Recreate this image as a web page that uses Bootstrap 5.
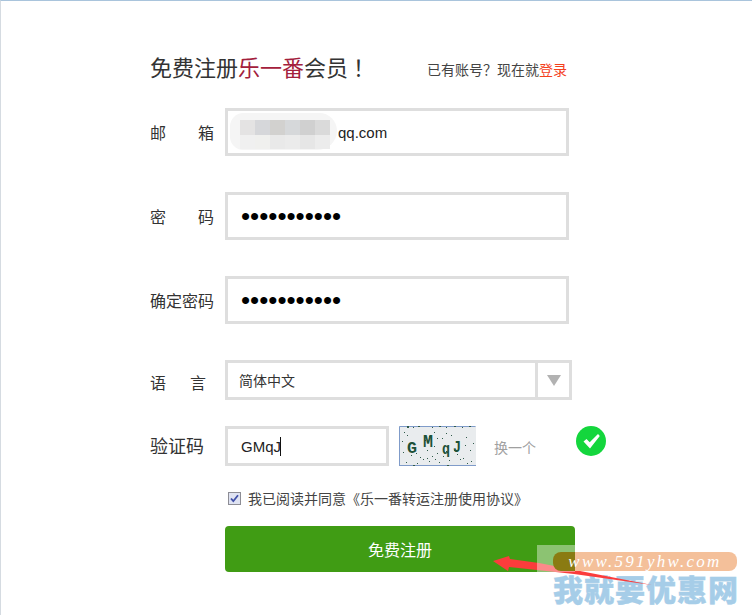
<!DOCTYPE html>
<html lang="zh">
<head>
<meta charset="utf-8">
<link href="https://cdn.jsdelivr.net/npm/bootstrap@5.3.0/dist/css/bootstrap.min.css" rel="stylesheet">
<style>
html,body{height:100%;}
body{background:#fff;color:#333;font-family:"Noto Sans CJK SC","Liberation Sans",sans-serif;overflow:hidden;}
.frame{position:relative;width:752px;height:615px;border-top:1px solid #a9c4dc;border-left:1px solid #d5dbe1;padding:39px 0 0 149px;overflow:hidden;}
.reg-form{width:460px;}
.head-row{height:52px;}
.head-title{font-size:22px;line-height:52px;margin:0;font-weight:400;color:#333;width:277px;}
.head-title em{font-style:normal;color:#a3203c;}
.punct{font-family:"Noto Sans CJK TC",sans-serif;}
.title-bang{margin-left:5px;}
.head-login{font-size:14px;color:#444;white-space:nowrap;padding-top:19px;}
.head-login a{color:#f4401c;text-decoration:none;}
.field-row{margin-top:16px;height:48px;}
.field-row + .field-row{margin-top:36px;}
.field-label{width:75px;flex:none;font-size:16px;line-height:1;color:#333;margin:0;}
.label-low{padding-top:4px;}
.label-high{padding-bottom:2px;font-size:18px;}
.spread{display:flex;justify-content:space-between;width:64px;}
.spread-short{width:56px;}
.plain-input{width:344px;height:48px;border:3px solid #dedede;border-radius:0;padding:0 13px;font-family:"Liberation Sans",sans-serif;font-size:15px;color:#222;box-shadow:none;position:relative;flex:none;}
.plain-input:focus{border-color:#dedede;box-shadow:none;}
.pw-input{font-size:26px;letter-spacing:0;color:#000;}
.field-wrap{position:relative;flex:none;}
.blur-patch{position:absolute;left:5px;top:5px;width:107px;height:37px;display:grid;grid-template-columns:repeat(6,15px);grid-template-rows:15px 14px;padding:7px 0 0 10px;border-radius:18px 24px 26px 18px;background:#f5f5f5;}
.blur-patch i{display:block;}
.email-wrap .plain-input{padding:0 0 0 110px;}
.lang-row{margin-top:36px;height:40px;}
.lang-box{width:347px;height:40px;border:3px solid #dedede;flex:none;}
.lang-select{height:34px;border:0;border-radius:0;background-image:none;font-size:14px;padding:0 11px;color:#333;flex:1;box-shadow:none;font-family:"Noto Sans CJK SC",sans-serif;}
.lang-arrow{width:34px;flex:none;border-left:3px solid #dedede;}
.lang-arrow b{display:block;border-style:solid;border-width:11px 7.500px 0;border-color:#b2b2b2 transparent transparent;}
.code-row{margin-top:26px;height:40px;}
.code-input{width:164px;height:40px;padding:0 13px;}
.code-caret{position:absolute;left:55px;top:11px;width:1px;height:19px;background:#111;}
.code-pic{display:block;margin-left:10px;flex:none;}
.code-swap{font-size:14px;color:#a0a0a0;margin-left:18px;padding-top:1px;width:82px;flex:none;text-decoration:none;line-height:1;}
.code-ok{flex:none;align-self:flex-start;}
.agree-row{margin:25px 0 0 78px;height:14px;font-size:14px;line-height:14px;color:#444;white-space:nowrap;}
.agree-check{width:13px;height:13px;margin:0 7px 0 0;flex:none;}
.go-btn{display:block;width:350px;height:46px;margin:21px 0 0 75px;background:#409c14;border:0;border-radius:4px;color:#fff;font-size:16px;padding:0;}
.go-btn:hover{background:#409c14;color:#fff;}
.mark-layer{position:absolute;left:0;top:0;width:751px;height:614px;pointer-events:none;}
.mark-url{position:absolute;left:552px;top:551px;width:184px;height:19px;border-radius:8px;background:linear-gradient(90deg,#8a7b12 22px,#f4c09a 22px);color:#fff;font-family:"Liberation Serif",serif;font-style:italic;font-size:17px;letter-spacing:2.300px;line-height:19px;text-align:center;white-space:nowrap;}
.mark-veil{position:absolute;left:536px;top:544px;width:38px;height:27px;background:rgba(255,255,255,.4);}
.mark-name{position:absolute;left:552px;top:571px;width:186px;font-size:30px;line-height:32px;font-weight:900;color:#a6cde8;-webkit-text-stroke:.4px #a6cde8;letter-spacing:1px;white-space:nowrap;}
.mark-arrow{position:absolute;left:0;top:0;}
</style>
</head>
<body>
<div class="frame">
  <div class="reg-form">
    <div class="head-row d-flex">
      <h1 class="head-title">免费注册<em>乐一番</em>会员<span class="punct title-bang">！</span></h1>
      <div class="head-login">已有账号<span class="punct">？</span>现在就<a href="#">登录</a></div>
    </div>
    <div class="field-row d-flex align-items-center">
      <label class="field-label"><span class="spread"><span>邮</span><span>箱</span></span></label>
      <div class="field-wrap email-wrap">
        <input class="form-control plain-input" type="text" value="qq.com">
        <div class="blur-patch">
          <i style="background:#e4e3e3"></i><i style="background:#d6d7da"></i><i style="background:#d2d1cf"></i><i style="background:#d6d8da"></i><i style="background:#d0d0d0"></i><i style="background:#dadada"></i>
          <i style="background:#f0f0f0"></i><i style="background:#f0f0ee"></i><i style="background:#e9e9e9"></i><i style="background:#ebebeb"></i><i style="background:#e6e6e6"></i><i style="background:#ececec"></i>
        </div>
      </div>
    </div>
    <div class="field-row d-flex align-items-center">
      <label class="field-label"><span class="spread"><span>密</span><span>码</span></span></label>
      <input class="form-control plain-input pw-input" type="password" value="12345678901">
    </div>
    <div class="field-row d-flex align-items-center">
      <label class="field-label">确定密码</label>
      <input class="form-control plain-input pw-input" type="password" value="12345678901">
    </div>
    <div class="lang-row d-flex align-items-center">
      <label class="field-label label-low"><span class="spread spread-short"><span>语</span><span>言</span></span></label>
      <div class="lang-box d-flex">
        <select class="form-select lang-select"><option>简体中文</option></select>
        <div class="lang-arrow d-flex align-items-center justify-content-center"><b></b></div>
      </div>
    </div>
    <div class="code-row d-flex align-items-center">
      <label class="field-label label-high">验证码</label>
      <div class="field-wrap">
        <input class="form-control plain-input code-input" type="text" value="GMqJ">
        <span class="code-caret"></span>
      </div>
      <svg class="code-pic" width="77" height="40" viewBox="0 0 77 40">
        <rect width="77" height="40" fill="#e9ecee"/>
        <path d="M.5 39.500V.5h76" fill="none" stroke="#7f9bc9"/><path d="M0 39.500h77" stroke="#7f9bc9"/>
        <path fill="#2f5a4a" d="M8 0h2v2H8zM14 1h1v1h-1zM19 0h2v1h-2zM33 1h1v1h-1zM40 0h2v1h-2zM47 1h1v1h-1zM55 0h2v1h-2zM63 1h1v1h-1zM70 0h2v1h-2zM5 6h1v1H5zM8 9h1v1H8zM30 10h1v1h-1zM35 6h1v1h-1zM38 12h1v1h-1zM43 12h1v1h-1zM47 7h1v1h-1zM52 9h1v1h-1zM67 11h1v1h-1zM74 17h1v1h-1zM71 24h1v1h-1zM35 20h1v1h-1zM28 24h1v1h-1zM4 26h1v1H4zM12 29h1v1h-1zM21 31h1v1h-1zM24 33h1v1h-1zM30 35h1v1h-1zM36 33h1v1h-1zM44 30h1v1h-1zM50 34h1v1h-1zM58 28h1v1h-1zM64 32h1v1h-1zM72 35h1v1h-1zM7 36h1v1H7zM18 37h1v1h-1zM40 36h1v1h-1zM47 25h1v1h-1zM66 19h1v1h-1zM3 15h1v1H3zM26 14h1v1h-1zM59 16h1v1h-1zM55 24h1v1h-1zM17 27h1v1h-1zM38 27h1v1h-1zM33 30h1v1h-1zM28 32h1v1h-1zM61 33h1v1h-1zM68 37h1v1h-1zM14 39h2v1h-2zM48 39h2v1h-2z"/>
        <g fill="#1d5138" font-family="Liberation Mono,monospace" font-size="17" font-weight="700">
          <text x="8" y="27" textLength="10" lengthAdjust="spacingAndGlyphs">G</text><text x="24" y="21" font-size="19" textLength="10" lengthAdjust="spacingAndGlyphs">M</text><text x="43" y="28" textLength="8" lengthAdjust="spacingAndGlyphs">q</text><text x="54" y="26" textLength="8" lengthAdjust="spacingAndGlyphs">J</text>
        </g>
      </svg>
      <a class="code-swap" href="#">换一个</a>
      <svg class="code-ok" width="30" height="30" viewBox="0 0 30 30">
        <circle cx="15" cy="15" r="15" fill="#14d63d"/>
        <path d="M7.500 15.500l3-2.500 3.200 3.300L22 8l1.800 2-9.800 12.500z" fill="#fff"/>
      </svg>
    </div>
    <div class="agree-row d-flex align-items-center">
      <svg class="agree-check" viewBox="0 0 13 13"><rect x=".5" y=".5" width="12" height="12" fill="#dfe3f2" stroke="#8d8d95"/><path d="M3 6.500l2.300 2.700L10 3.200" fill="none" stroke="#3f4fa8" stroke-width="1.800"/></svg>
      <span>我已阅读并同意《乐一番转运注册使用协议》</span>
    </div>
    <button class="btn go-btn" type="button">免费注册</button>
  </div>
  <div class="mark-layer">
    <div class="mark-name">我就要优惠网</div>
    <svg class="mark-arrow" width="751" height="614" viewBox="0 0 751 614">
      <path d="M492 560l16-5 1 3 29 4 36 7 77 15-78-11-37-4-28-3-1 4z" fill="#fb3c3c"/>
    </svg>
    <div class="mark-veil"></div>
    <div class="mark-url">www.591yhw.com</div>
  </div>
</div>
</body>
</html>
